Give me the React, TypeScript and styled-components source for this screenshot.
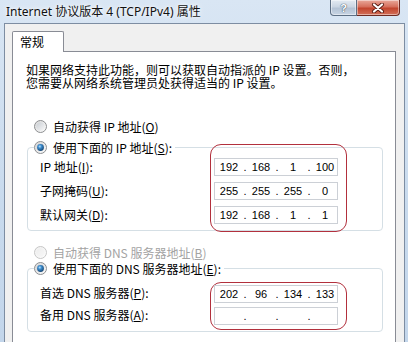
import React, { useId } from "react";
import styled, { createGlobalStyle } from "styled-components";

const GlobalStyle = createGlobalStyle`
  html, body {
    margin: 0;
    padding: 0;
    background: #c9dbee;
  }
  #root {
    width: 408px;
    height: 342px;
    overflow: hidden;
  }
`;

const Window = styled.div`
    display: flex;
    flex-direction: column;
    width: 408px;
    height: 342px;
    overflow: hidden;
    background: linear-gradient(180deg, #d9e6f4 0%, #c8daed 60%, #c3d6eb 100%);
    font-family: "Noto Sans CJK SC", sans-serif;
    color: #000;
`;

const TitleBar = styled.div`
    display: flex;
    align-items: flex-start;
    flex: none;
    height: 23px;
    padding: 0 8px 0 6px;
`;

const Title = styled.div`
    flex: 1;
    font-family: "Noto Sans", "Noto Sans CJK SC", sans-serif;
    font-size: 12px;
    line-height: 23px;
    color: #111;
    white-space: nowrap;
    text-shadow: 0 0 6px rgba(255, 255, 255, 0.95), 0 0 3px rgba(255, 255, 255, 0.9);
`;

const CaptionButtons = styled.div`
    display: flex;
    height: 16px;
`;

const CaptionButton = styled.div<{ $kind: "help" | "close" }>`
    display: flex;
    align-items: center;
    justify-content: center;
    box-sizing: border-box;
    width: ${props => (props.$kind === "close" ? 43 : 27)}px;
    height: 16px;
    border: 1px solid ${props => (props.$kind === "close" ? "#6d2a22" : "#5d6f84")};
    border-top: none;
    border-left-width: ${props => (props.$kind === "close" ? 0 : 1)}px;
    border-radius: ${props => (props.$kind === "close" ? "0 0 4px 0" : "0 0 0 4px")};
    background: ${props =>
        props.$kind === "close"
            ? "linear-gradient(180deg, #e9a99b 0%, #d66f5c 45%, #c2452e 55%, #d2705a 100%)"
            : "linear-gradient(180deg, #e3eaf2 0%, #cbd6e3 45%, #b4c3d5 55%, #c8d5e4 100%)"};
    box-shadow: inset 0 0 0 1px rgba(255, 255, 255, 0.45);
`;

const HelpGlyph = styled.span`
    font-family: "Liberation Sans", sans-serif;
    font-weight: 700;
    font-size: 11px;
    line-height: 14px;
    color: #fff;
    text-shadow: 0 0 1px #3b4a5c, 0 0 1px #3b4a5c;
`;

const Frame = styled.div`
    flex: 1;
    display: flex;
    flex-direction: column;
    margin: 0 3px 0 4px;
    padding: 7px 8px 0 7px;
    border: 1px solid #7d8da2;
    border-bottom: none;
    background: #f0f0f0;
`;

const TabStrip = styled.div`
    display: flex;
`;

const Tab = styled.div`
    position: relative;
    z-index: 1;
    box-sizing: border-box;
    width: 52px;
    height: 21px;
    margin-bottom: -1px;
    padding-left: 7px;
    border: 1px solid #898c95;
    border-bottom: none;
    border-radius: 2px 2px 0 0;
    background: #fff;
    font-size: 12px;
    line-height: 20px;
`;

const TabPage = styled.div`
    flex: 1;
    min-height: 320px;
    padding: 11px 12px 0 13px;
    border: 1px solid #898c95;
    background: #fff;
`;

const Intro = styled.p`
    margin: 0;
    font-size: 12px;
    line-height: 13px;
    white-space: nowrap;
`;

const RadioRow = styled.div<{ $mt: number; $disabled?: boolean }>`
    display: flex;
    align-items: center;
    gap: 6px;
    height: 16px;
    margin: ${props => props.$mt}px 0 0 8px;
    font-size: 12px;
    white-space: nowrap;
    color: ${props => (props.$disabled ? "#a3a3a3" : "#000")};
`;

const GroupBox = styled.fieldset<{ $mt: number }>`
    margin: ${props => props.$mt}px 0 0 1px;
    padding: 0 0 0 12px;
    border: 1px solid #d5dfe5;
    border-radius: 4px;
    min-width: 0;
`;

const GroupLegend = styled.legend`
    display: flex;
    align-items: center;
    gap: 6px;
    height: 16px;
    margin-left: -6px;
    padding: 0 3px 0 0;
    font-size: 12px;
    white-space: nowrap;
`;

const GroupBody = styled.div`
    display: flex;
    align-items: flex-start;
`;

const LabelColumn = styled.div<{ $pt: number; $gap: number }>`
    display: flex;
    flex-direction: column;
    flex: none;
    width: 170px;
    padding-top: ${props => props.$pt}px;
    gap: ${props => props.$gap}px;
`;

const FieldLabel = styled.div`
    height: 18px;
    font-size: 12px;
    line-height: 18px;
    white-space: nowrap;
`;

const Key = styled.span`
    text-decoration: underline;
    text-underline-offset: 1px;
`;

const Highlight = styled.div<{ $mt: number; $mb: number; $pt: number; $pb: number; $gap: number }>`
    display: flex;
    flex-direction: column;
    gap: ${props => props.$gap}px;
    margin: ${props => props.$mt}px 0 ${props => props.$mb}px 0;
    padding: ${props => props.$pt}px 8px ${props => props.$pb}px 3px;
    border: 1.5px solid #b2303d;
    border-radius: 11px;
`;

const IpBox = styled.div`
    display: flex;
    align-items: center;
    box-sizing: border-box;
    width: 124px;
    height: 18px;
    padding-left: 2px;
    border: 1px solid #ccd0d6;
    background: #fff;
    font-family: "Liberation Sans", Arial, sans-serif;
    font-size: 11px;
    line-height: 16px;
    color: #000;
`;

const Octet = styled.span`
    width: 24px;
    text-align: center;
`;

const Dot = styled.span`
    width: 8px;
    text-align: center;
`;

type RadioProps = { checked?: boolean; disabled?: boolean };

const Radio: React.FC<RadioProps> = ({ checked = false, disabled = false }) => {
    const id = useId().replace(/:/g, "");
    return (
        <svg width="13" height="13" viewBox="0 0 13 13">
            <defs>
                <linearGradient id={`${id}-ring`} x1="0" y1="0" x2="1" y2="1">
                    <stop offset="0" stopColor={disabled ? "#f0f0f0" : "#d8d8d8"} />
                    <stop offset="1" stopColor="#fdfdfd" />
                </linearGradient>
                <linearGradient id={`${id}-well`} x1="0" y1="0" x2="1" y2="1">
                    <stop offset="0" stopColor={disabled ? "#ededed" : "#c9ced4"} />
                    <stop offset="1" stopColor="#f7f7f7" />
                </linearGradient>
                <radialGradient id={`${id}-dot`} cx="0.4" cy="0.35" r="0.7">
                    <stop offset="0" stopColor="#bfe4fb" />
                    <stop offset="0.35" stopColor="#3f8fd0" />
                    <stop offset="1" stopColor="#123f6b" />
                </radialGradient>
            </defs>
            <circle
                cx="6.5"
                cy="6.5"
                r="6"
                fill={`url(#${id}-ring)`}
                stroke={disabled ? "#c6c6c6" : "#8c8e91"}
                strokeWidth="1"
            />
            <circle cx="6.5" cy="6.5" r="4.2" fill={`url(#${id}-well)`} />
            {checked && <circle cx="6.5" cy="6.5" r="3.4" fill={`url(#${id}-dot)`} />}
        </svg>
    );
};

const IpField: React.FC<{ octets: string[] }> = ({ octets }) => (
    <IpBox>
        {octets.map((octet, i) => (
            <React.Fragment key={i}>
                {i > 0 && <Dot>.</Dot>}
                <Octet>{octet}</Octet>
            </React.Fragment>
        ))}
    </IpBox>
);

const CloseGlyph = () => (
    <svg width="14" height="10" viewBox="0 0 14 10">
        <path d="M3 1.5 L11 8.5 M11 1.5 L3 8.5" stroke="#5a1d14" strokeWidth="4" strokeLinecap="round" />
        <path d="M3 1.5 L11 8.5 M11 1.5 L3 8.5" stroke="#fff" strokeWidth="2.2" strokeLinecap="round" />
    </svg>
);

export default function App() {
    return (
        <>
            <GlobalStyle />
            <Window>
                <TitleBar>
                    <Title>Internet 协议版本 4 (TCP/IPv4) 属性</Title>
                    <CaptionButtons>
                        <CaptionButton $kind="help">
                            <HelpGlyph>?</HelpGlyph>
                        </CaptionButton>
                        <CaptionButton $kind="close">
                            <CloseGlyph />
                        </CaptionButton>
                    </CaptionButtons>
                </TitleBar>

                <Frame>
                    <TabStrip>
                        <Tab>常规</Tab>
                    </TabStrip>
                    <TabPage>
                        <Intro>
                            如果网络支持此功能，则可以获取自动指派的 IP 设置。否则，
                            <br />
                            您需要从网络系统管理员处获得适当的 IP 设置。
                        </Intro>

                        <RadioRow $mt={29}>
                            <Radio />
                            <span>
                                自动获得 IP 地址(<Key>O</Key>)
                            </span>
                        </RadioRow>

                        <GroupBox $mt={5}>
                            <GroupLegend>
                                <Radio checked />
                                <span>
                                    使用下面的 IP 地址(<Key>S</Key>):
                                </span>
                            </GroupLegend>
                            <GroupBody>
                                <LabelColumn $pt={3} $gap={6}>
                                    <FieldLabel>
                                        IP 地址(<Key>I</Key>):
                                    </FieldLabel>
                                    <FieldLabel>
                                        子网掩码(<Key>U</Key>):
                                    </FieldLabel>
                                    <FieldLabel>
                                        默认网关(<Key>D</Key>):
                                    </FieldLabel>
                                </LabelColumn>
                                <Highlight $mt={-11} $mb={-2} $pt={13} $pb={7} $gap={6}>
                                    <IpField octets={["192", "168", "1", "100"]} />
                                    <IpField octets={["255", "255", "255", "0"]} />
                                    <IpField octets={["192", "168", "1", "1"]} />
                                </Highlight>
                            </GroupBody>
                        </GroupBox>

                        <RadioRow $mt={13} $disabled>
                            <Radio disabled />
                            <span>
                                自动获得 DNS 服务器地址(<Key>B</Key>)
                            </span>
                        </RadioRow>

                        <GroupBox $mt={0}>
                            <GroupLegend>
                                <Radio checked />
                                <span>
                                    使用下面的 DNS 服务器地址(<Key>E</Key>):
                                </span>
                            </GroupLegend>
                            <GroupBody>
                                <LabelColumn $pt={8} $gap={4}>
                                    <FieldLabel>
                                        首选 DNS 服务器(<Key>P</Key>):
                                    </FieldLabel>
                                    <FieldLabel>
                                        备用 DNS 服务器(<Key>A</Key>):
                                    </FieldLabel>
                                </LabelColumn>
                                <Highlight $mt={6} $mb={1} $pt={2} $pb={4} $gap={4}>
                                    <IpField octets={["202", "96", "134", "133"]} />
                                    <IpField octets={["", "", "", ""]} />
                                </Highlight>
                            </GroupBody>
                        </GroupBox>
                    </TabPage>
                </Frame>
            </Window>
        </>
    );
}
